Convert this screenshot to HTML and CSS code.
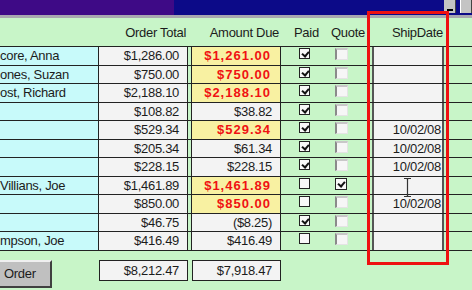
FILE: index.html
```html
<!DOCTYPE html>
<html lang="en">
<head>
  <meta charset="UTF-8" />
  <title>Orders</title>
  <link rel="stylesheet" href="styles.css">
</head>
<body>

<div class="titlebar">
  <div class="title-left"></div>
  <div class="title-right">
    <span class="winbtn min"><span class="bar"></span></span>
    <span class="winbtn max"></span>
  </div>
</div>

<div class="form">
  <div class="head">
    <div></div>
    <div class="h-total">Order Total</div>
    <div></div>
    <div class="h-due">Amount Due</div>
    <div class="h-paid">Paid</div>
    <div class="h-quote">Quote</div>
    <div></div>
    <div class="h-ship">ShipDate</div>
    <div></div>
  </div>

  <div class="rows">
    <div class="row">
      <div class="c-name">core, Anna</div><div class="c-total">$1,286.00</div><div class="gap"></div>
      <div class="c-due owing">$1,261.00</div>
      <div class="c-paid"><span class="chk on"></span></div><div class="c-quote"><span class="qbox"></span></div>
      <div class="gap"></div><div class="c-ship"></div><div class="rest"></div>
    </div>
    <div class="row">
      <div class="c-name">ones, Suzan</div><div class="c-total">$750.00</div><div class="gap"></div>
      <div class="c-due owing">$750.00</div>
      <div class="c-paid"><span class="chk on"></span></div><div class="c-quote"><span class="qbox"></span></div>
      <div class="gap"></div><div class="c-ship"></div><div class="rest"></div>
    </div>
    <div class="row">
      <div class="c-name">ost, Richard</div><div class="c-total">$2,188.10</div><div class="gap"></div>
      <div class="c-due owing">$2,188.10</div>
      <div class="c-paid"><span class="chk on"></span></div><div class="c-quote"><span class="qbox"></span></div>
      <div class="gap"></div><div class="c-ship"></div><div class="rest"></div>
    </div>
    <div class="row">
      <div class="c-name"></div><div class="c-total">$108.82</div><div class="gap"></div>
      <div class="c-due">$38.82</div>
      <div class="c-paid"><span class="chk on"></span></div><div class="c-quote"><span class="qbox"></span></div>
      <div class="gap"></div><div class="c-ship"></div><div class="rest"></div>
    </div>
    <div class="row">
      <div class="c-name"></div><div class="c-total">$529.34</div><div class="gap"></div>
      <div class="c-due owing">$529.34</div>
      <div class="c-paid"><span class="chk on"></span></div><div class="c-quote"><span class="qbox"></span></div>
      <div class="gap"></div><div class="c-ship">10/02/08</div><div class="rest"></div>
    </div>
    <div class="row">
      <div class="c-name"></div><div class="c-total">$205.34</div><div class="gap"></div>
      <div class="c-due">$61.34</div>
      <div class="c-paid"><span class="chk on"></span></div><div class="c-quote"><span class="qbox"></span></div>
      <div class="gap"></div><div class="c-ship">10/02/08</div><div class="rest"></div>
    </div>
    <div class="row">
      <div class="c-name"></div><div class="c-total">$228.15</div><div class="gap"></div>
      <div class="c-due">$228.15</div>
      <div class="c-paid"><span class="chk on"></span></div><div class="c-quote"><span class="qbox"></span></div>
      <div class="gap"></div><div class="c-ship">10/02/08</div><div class="rest"></div>
    </div>
    <div class="row">
      <div class="c-name">Villians, Joe</div><div class="c-total">$1,461.89</div><div class="gap"></div>
      <div class="c-due owing">$1,461.89</div>
      <div class="c-paid"><span class="chk"></span></div><div class="c-quote"><span class="chk on"></span></div>
      <div class="gap"></div><div class="c-ship"></div><div class="rest"></div>
    </div>
    <div class="row">
      <div class="c-name"></div><div class="c-total">$850.00</div><div class="gap"></div>
      <div class="c-due owing">$850.00</div>
      <div class="c-paid"><span class="chk"></span></div><div class="c-quote"><span class="qbox"></span></div>
      <div class="gap"></div><div class="c-ship">10/02/08</div><div class="rest"></div>
    </div>
    <div class="row">
      <div class="c-name"></div><div class="c-total">$46.75</div><div class="gap"></div>
      <div class="c-due">($8.25)</div>
      <div class="c-paid"><span class="chk on"></span></div><div class="c-quote"><span class="qbox"></span></div>
      <div class="gap"></div><div class="c-ship"></div><div class="rest"></div>
    </div>
    <div class="row">
      <div class="c-name">mpson, Joe</div><div class="c-total">$416.49</div><div class="gap"></div>
      <div class="c-due">$416.49</div>
      <div class="c-paid"><span class="chk"></span></div><div class="c-quote"><span class="qbox"></span></div>
      <div class="gap"></div><div class="c-ship"></div><div class="rest"></div>
    </div>
  </div>

  <div class="foot">
    <button class="order-btn">Order</button>
    <div class="sum">$8,212.47</div>
    <div class="sum due">$7,918.47</div>
  </div>

  <svg class="ibeam" width="9" height="19" viewBox="0 0 9 19"><path d="M1 0.5h3l0.5 1 0.5-1h3M4.5 1.5v16M1 18.5h3l0.5-1 0.5 1h3" fill="none" stroke="#333" stroke-width="1.2"/></svg>
  <div class="highlight"></div>
</div>

</body>
</html>
```

FILE: styles.css
```css
body { margin: 0; width: 472px; height: 290px; overflow: hidden; background: #c8f5c8;
       font-family: "Liberation Sans", Arial, sans-serif; font-size: 13px; letter-spacing: -0.3px; color: #1c1c1c; }

.titlebar { height: 15px; display: flex; border-bottom: 3px solid #a8a8b0; }
.title-left { width: 174px; background: #3e0a86; }
.title-right { flex: 1; background: #0c0a88; display: flex; justify-content: flex-end; align-items: flex-start; gap: 4px; }
.winbtn { width: 12px; height: 13px; background: #c4c4c4; border-right: 1px solid #444; box-sizing: border-box;
          display: flex; align-items: flex-end; justify-content: center; }
.winbtn .bar { width: 6px; height: 2px; background: #000; margin-bottom: 2px; }
.winbtn.max { border-left: 1px solid #fff; }

.form { position: relative; }

.head, .row { display: grid; grid-template-columns: 99px 89px 3px 90px 41px 45px 5px 72px 1fr; }
.head { height: 28px; align-items: center; border-bottom: 1px solid #222; white-space: nowrap; }
.h-total { text-align: right; padding-right: 2px; }
.h-due { text-align: right; padding-right: 2px; }
.h-paid { padding-left: 13px; }
.h-quote { padding-left: 9px; }
.h-ship { text-align: right; padding-right: 1px; }

.row { height: 18.5px; box-sizing: border-box; border-bottom: 1px solid #222; line-height: 17px; }
.row > div { box-sizing: border-box; overflow: hidden; white-space: nowrap; }

.c-name { background: #c8fafa; border-right: 1px solid #222; }
.c-total { background: #f3f3f3; border-right: 1px solid #222; text-align: right; padding-right: 8px; }
.c-due { background: #f3f3f3; border-left: 1px solid #222; border-right: 1px solid #222; text-align: right; padding-right: 8px; }
.c-due.owing { background: #f8f1a2; color: #f01212; font-weight: bold; letter-spacing: 1px; padding-right: 9px; }
.c-paid { padding-left: 18px; padding-top: 1px; }
.c-quote { padding-left: 13px; padding-top: 1px; }
.c-ship { background: #f3f3f3; border-left: 2px solid #555; border-right: 2px solid #555; text-align: right; padding-right: 1px; }

.chk { display: block; width: 11px; height: 11px; box-sizing: border-box; border: 1px solid #222; background: #f8f8f8; position: relative; }
.chk.on::after { content: ""; position: absolute; left: 1px; top: 0; width: 5px; height: 3px;
                 border-left: 2px solid #111; border-bottom: 2px solid #111; transform: translate(1px, 2px) rotate(-50deg); }
.c-quote .chk { width: 12px; height: 12px; }
.qbox { display: block; width: 13px; height: 12px; box-sizing: border-box; background: #f6f6f6;
        border-left: 2px solid #8a8a8a; border-top: 2px solid #c8c8c8; border-right: 1px solid #e4e4e4; border-bottom: 1px solid #e4e4e4; }

.foot { display: flex; align-items: flex-start; padding-top: 9px; }
.order-btn { width: 52px; height: 28px; margin: 0; padding: 0 0 0 4px; text-align: left; background: #c0c0c0;
             font-family: inherit; font-size: 13px; letter-spacing: -0.3px; color: #1c1c1c;
             border: 2px solid; border-color: #f0f0f0 #404040 #404040 #c0c0c0; border-left: 0; }
.sum { width: 89px; height: 21px; box-sizing: border-box; margin-left: 47px; background: #f3f3f3; border: 1px solid #222;
       text-align: right; padding-right: 8px; line-height: 19px; }
.sum.due { margin-left: 4px; }

.ibeam { position: absolute; left: 403px; top: 160px; }
.highlight { position: absolute; left: 367px; top: -7px; width: 82px; height: 254px; box-sizing: border-box; border: 3px solid #ee1111; }
```
